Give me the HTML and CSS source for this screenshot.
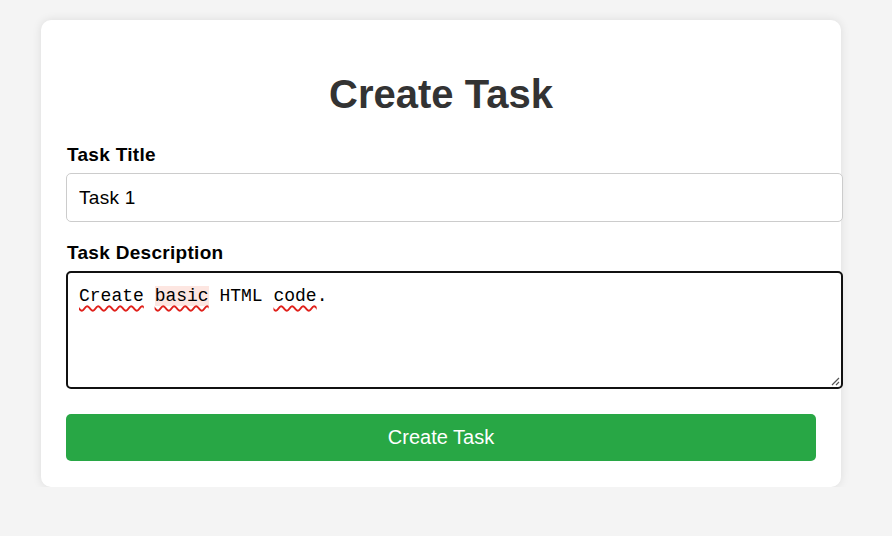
FILE: index.html
```
<!DOCTYPE html>
<html lang="en">
<head>
<meta charset="utf-8">
<title>Create Task</title>
<link rel="stylesheet" href="styles.css">
</head>
<body>
<div class="card">
  <h1 class="title">Create Task</h1>
  <form class="form">
    <label class="label" for="t">Task Title</label>
    <input class="input" id="t" type="text" value="Task 1">
    <label class="label" for="d">Task Description</label>
    <div class="textarea" id="d" role="textbox" aria-multiline="true"><span class="err">Create</span> <span class="err hl">basic</span> HTML <span class="err">code</span>.<svg class="grip" width="10" height="10" viewBox="0 0 10 10"><path d="M9 2 L2 9 M9 6 L6 9" stroke="#555" stroke-width="1.2" fill="none"/></svg></div>
    <button class="btn" type="button">Create Task</button>
  </form>
</div>
</body>
</html>
```
FILE: styles.css
```
html, body {
  margin: 0;
  padding: 0;
  background: #f4f4f4;
  font-family: "Liberation Sans", Arial, sans-serif;
}
.card {
  box-sizing: border-box;
  width: 800px;
  margin: 20px 0 0 41px;
  padding: 25px 25px 26px;
  background: #fff;
  border-radius: 10px;
  box-shadow: 0 0 10px rgba(0, 0, 0, 0.1);
}
.title {
  margin: 26px 0 27px;
  font-size: 40px;
  font-weight: bold;
  color: #333;
  text-align: center;
  line-height: 46px;
}
.form {
  display: flex;
  flex-direction: column;
  align-items: flex-start;
}
.label {
  display: block;
  font-size: 19px;
  letter-spacing: 0.3px;
  font-weight: bold;
  color: #000;
  margin: 0 0 8px 1px;
  line-height: 21px;
}
.input {
  box-sizing: border-box;
  width: 777px;
  height: 49px;
  margin: 0 0 20px;
  padding: 0 12px;
  border: 1px solid #ccc;
  border-radius: 5px;
  font-family: "Liberation Sans", Arial, sans-serif;
  font-size: 19px;
  letter-spacing: 0.3px;
  color: #000;
  background: #fff;
}
.textarea {
  position: relative;
  box-sizing: border-box;
  width: 777px;
  height: 118px;
  margin: 0 0 25px;
  padding: 13px 11px;
  border: 2px solid #111;
  border-radius: 5px;
  font-family: "Liberation Mono", "DejaVu Sans Mono", monospace;
  font-size: 18px;
  line-height: 21px;
  color: #000;
  white-space: pre;
}
.err {
  text-decoration: underline wavy #e0201a;
  text-decoration-thickness: 1.5px;
  text-underline-offset: 4px;
  text-decoration-skip-ink: none;
}
.hl {
  background: #fde6e1;
}
.grip {
  position: absolute;
  right: 1px;
  bottom: 1px;
}
.btn {
  width: 750px;
  height: 47px;
  border: none;
  border-radius: 5px;
  background: #28a745;
  color: #fff;
  font-family: "Liberation Sans", Arial, sans-serif;
  font-size: 20px;
  padding: 0;
  cursor: pointer;
}
```
